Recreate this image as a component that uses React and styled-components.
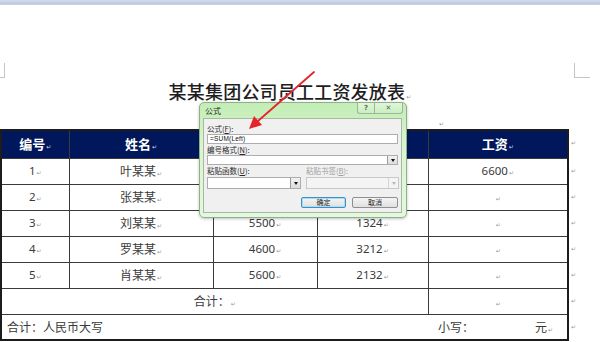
import React from "react";
import styled, { createGlobalStyle } from "styled-components";

const Global = createGlobalStyle`
  html, body { margin: 0; padding: 0; background: #fff; }
  body { width: 600px; height: 342px; overflow: hidden; font-family: "Noto Sans CJK SC", "Noto Sans", sans-serif; }
`;

const Page = styled.div`
  position: relative;
  width: 600px;
  height: 342px;
  overflow: hidden;
  background: #fff;
`;

const TopBar = styled.div`
  height: 5px;
  background: linear-gradient(#d3deec, #b7c8dd);
  border-bottom: 1px solid #c9d3df;
  box-sizing: border-box;
`;

const CornerRow = styled.div`
  display: flex;
  justify-content: space-between;
  padding: 58px 10px 0 0;
  height: 16px;
`;

const Corner = styled.div`
  width: ${(p) => p.$w}px;
  height: 15px;
  box-sizing: border-box;
  border-bottom: 1px solid #c4c4c4;
  ${(p) => (p.$side === "left" ? "border-right: 1px solid #c4c4c4;" : "border-left: 1px solid #c4c4c4;")}
`;

const Title = styled.div`
  margin-top: 2px;
  width: 580px;
  height: 20px;
  text-align: center;
  font-family: "Noto Sans CJK SC", sans-serif;
  font-weight: 500;
  font-size: 18px;
  line-height: 20px;
  color: #1e1e1e;
  letter-spacing: 0.2px;
  overflow: visible;
`;

const EmptyLine = styled.div`
  height: 28px;
  padding: 14px 0 0 438px;
  box-sizing: border-box;
  line-height: 8px;
`;

const Mark = styled.span`
  font-family: "DejaVu Sans", sans-serif;
  font-size: 6px;
  line-height: 0;
  color: ${(p) => (p.$light ? "#cfd3e6" : "#9a9a9a")};
  margin-left: 1px;
  font-weight: 400;
`;

const TableWrap = styled.div`
  display: flex;
  align-items: flex-start;
`;

const Table = styled.table`
  width: 567px;
  table-layout: fixed;
  border-collapse: collapse;
  border: 2px solid #1c1c1c;
  font-size: 12px;
  color: #383838;
`;

const HeadRow = styled.tr`
  height: 28px;
  background: #00175c;
`;

const Th = styled.th`
  border: 1px solid #3a3a3a;
  color: #fff;
  font-family: "Noto Sans CJK SC", sans-serif;
  font-weight: 600;
  font-size: 13px;
  line-height: 16px;
  padding: 0;
  text-align: center;
`;

const Row = styled.tr`
  height: 26px;
`;

const Td = styled.td`
  border: 1px solid #3a3a3a;
  padding: 0;
  line-height: 16px;
  text-align: ${(p) => p.$align || "center"};
  font-family: ${(p) => (p.$num ? '"Noto Sans", sans-serif' : '"Noto Sans CJK SC", sans-serif')};
  font-size: ${(p) => (p.$num ? "11.5px" : "12px")};
  color: #3a3a3a;
`;

const FootLine = styled.div`
  display: flex;
  align-items: center;
  padding-left: 5px;
  font-size: 12px;
`;

const Grow = styled.span`
  flex: 1;
`;

const Small = styled.span`
  margin-right: 61px;
`;

const Yuan = styled.span`
  margin-right: 14px;
`;

const MarkCol = styled.div`
  display: flex;
  flex-direction: column;
  padding-left: 1px;
  line-height: 8px;
`;

const MarkCell = styled.div`
  height: ${(p) => p.$h}px;
  padding-top: 5px;
  box-sizing: border-box;
`;

/* Dialog */
const Dialog = styled.div`
  position: absolute;
  left: 199px;
  top: 102px;
  width: 208px;
  height: 116px;
  box-sizing: border-box;
  border: 1px solid #90b08a;
  border-radius: 5px;
  background: linear-gradient(#c3edb6, #d9f5d0 40%, #e3f8dd);
  padding: 0 4px 4px 3px;
  display: flex;
  flex-direction: column;
  box-shadow: 0 1px 3px rgba(0, 0, 0, 0.25);
  font-family: "Noto Sans CJK SC", sans-serif;
  font-size: 7.5px;
  color: #222;
`;

const TitleBar = styled.div`
  height: 15px;
  display: flex;
  justify-content: space-between;
  align-items: flex-start;
`;

const Caption = styled.span`
  padding: 2px 0 0 2px;
  font-size: 8px;
  line-height: 11px;
  color: #1a1a1a;
`;

const CapButtons = styled.div`
  display: flex;
  margin-right: -1px;
`;

const CapBtn = styled.div`
  width: ${(p) => p.$w}px;
  height: 11px;
  box-sizing: border-box;
  border: 1px solid #9fb59b;
  border-top: none;
  ${(p) => (p.$first ? "border-radius: 0 0 0 3px; border-right: none;" : "border-radius: 0 0 3px 0;")}
  background: linear-gradient(#dff6d8, #cbeec1);
  display: flex;
  align-items: center;
  justify-content: center;
  color: #606a60;
  font-family: "DejaVu Sans", sans-serif;
  font-size: 7px;
  font-weight: 700;
  line-height: 1;
`;

const Panel = styled.div`
  flex: 1;
  background: #f0f0f0;
  border: 1px solid #a7b9a4;
  padding: 4px 3px 0 3px;
  display: flex;
  flex-direction: column;
`;

const Label = styled.div`
  height: ${(p) => p.$h || 11}px;
  line-height: ${(p) => p.$h || 11}px;
  color: ${(p) => (p.$disabled ? "#a0a0a0" : "#2a2a2a")};
  white-space: nowrap;
  u { text-decoration: underline; }
`;

const Input = styled.div`
  height: 10px;
  box-sizing: border-box;
  background: #fff;
  border: 1px solid #abadb3;
  font-family: "Liberation Sans", sans-serif;
  font-size: 6.5px;
  line-height: 8px;
  padding-left: 2px;
  color: #111;
  letter-spacing: 0.2px;
`;

const Select = styled.div`
  height: ${(p) => p.$h || 10}px;
  box-sizing: border-box;
  background: ${(p) => (p.$disabled ? "#f4f4f4" : "#fff")};
  border: 1px solid ${(p) => (p.$disabled ? "#c8c8c8" : "#abadb3")};
  display: flex;
  justify-content: flex-end;
`;

const Drop = styled.div`
  width: 10px;
  height: 100%;
  box-sizing: border-box;
  border-left: 1px solid ${(p) => (p.$disabled ? "#d4d4d4" : "#9a9a9a")};
  background: ${(p) => (p.$disabled ? "#f4f4f4" : "linear-gradient(#f2f2f2, #dcdcdc)")};
  display: flex;
  align-items: center;
  justify-content: center;
  &::after {
    content: "";
    border-left: 2.5px solid transparent;
    border-right: 2.5px solid transparent;
    border-top: 3px solid ${(p) => (p.$disabled ? "#b8b8b8" : "#111")};
  }
`;

const Pair = styled.div`
  display: grid;
  grid-template-columns: 94px 93px;
  column-gap: 5px;
`;

const Buttons = styled.div`
  margin-top: 8px;
  display: flex;
  justify-content: flex-end;
  gap: 6px;
`;

const Btn = styled.div`
  width: ${(p) => p.$w}px;
  height: 11px;
  box-sizing: border-box;
  border: 1px solid ${(p) => (p.$primary ? "#3c8fc9" : "#8e8f8f")};
  border-radius: 2px;
  background: linear-gradient(#f4f4f4, #e0e0e0);
  box-shadow: ${(p) => (p.$primary ? "inset 0 0 0 1px #a9dcf5" : "none")};
  font-size: 7px;
  line-height: 9px;
  text-align: center;
  color: #222;
`;

const Overlay = styled.svg`
  position: absolute;
  left: 0;
  top: 0;
  pointer-events: none;
`;

const rows = [
  ["1", "叶某某", "", "", "6600"],
  ["2", "张某某", "", "", ""],
  ["3", "刘某某", "5500", "1324", ""],
  ["4", "罗某某", "4600", "3212", ""],
  ["5", "肖某某", "5600", "2132", ""],
];

const markHeights = [28, 26, 26, 26, 26, 26, 26, 26];

export default function App() {
  return (
    <Page>
      <Global />
      <TopBar />
      <CornerRow>
        <Corner $side="left" $w={5} />
        <Corner $side="right" $w={16} />
      </CornerRow>
      <Title>
        某某集团公司员工工资发放表<Mark>↵</Mark>
      </Title>
      <EmptyLine>
        <Mark>↵</Mark>
      </EmptyLine>
      <TableWrap>
        <Table>
          <colgroup>
            <col style={{ width: 68 }} />
            <col style={{ width: 144 }} />
            <col style={{ width: 104 }} />
            <col style={{ width: 111 }} />
            <col style={{ width: 140 }} />
          </colgroup>
          <thead>
            <HeadRow>
              <Th>编号<Mark $light>↵</Mark></Th>
              <Th>姓名<Mark $light>↵</Mark></Th>
              <Th />
              <Th />
              <Th>工资<Mark $light>↵</Mark></Th>
            </HeadRow>
          </thead>
          <tbody>
            {rows.map((r) => (
              <Row key={r[0]}>
                <Td $num>{r[0]}<Mark>↵</Mark></Td>
                <Td>{r[1]}<Mark>↵</Mark></Td>
                <Td $num>{r[2] && <>{r[2]}<Mark>↵</Mark></>}</Td>
                <Td $num>{r[3] && <>{r[3]}<Mark>↵</Mark></>}</Td>
                <Td $num>{r[4]}<Mark>↵</Mark></Td>
              </Row>
            ))}
            <Row>
              <Td colSpan={4}>合计：<Mark>↵</Mark></Td>
              <Td><Mark>↵</Mark></Td>
            </Row>
            <Row>
              <Td colSpan={5} $align="left">
                <FootLine>
                  <span>合计：人民币大写</span>
                  <Grow />
                  <Small>小写：</Small>
                  <Yuan>元<Mark>↵</Mark></Yuan>
                </FootLine>
              </Td>
            </Row>
          </tbody>
        </Table>
        <MarkCol>
          {markHeights.map((h, i) => (
            <MarkCell key={i} $h={h}>
              <Mark>↵</Mark>
            </MarkCell>
          ))}
        </MarkCol>
      </TableWrap>

      <Dialog>
        <TitleBar>
          <Caption>公式</Caption>
          <CapButtons>
            <CapBtn $w={17} $first>?</CapBtn>
            <CapBtn $w={29}>✕</CapBtn>
          </CapButtons>
        </TitleBar>
        <Panel>
          <Label>公式(<u>F</u>):</Label>
          <Input>=SUM(Left)</Input>
          <Label>编号格式(<u>N</u>):</Label>
          <Select>
            <Drop />
          </Select>
          <Pair>
            <Label $h={12}>粘贴函数(<u>U</u>):</Label>
            <Label $h={12} $disabled>粘贴书签(<u>B</u>):</Label>
            <Select $h={12}>
              <Drop />
            </Select>
            <Select $h={12} $disabled>
              <Drop $disabled />
            </Select>
          </Pair>
          <Buttons>
            <Btn $w={45} $primary>确定</Btn>
            <Btn $w={46}>取消</Btn>
          </Buttons>
        </Panel>
      </Dialog>

      <Overlay width="600" height="342" viewBox="0 0 600 342">
        <line x1="314" y1="72" x2="258" y2="121" stroke="#e5252a" strokeWidth="1.8" strokeLinecap="round" />
        <polygon points="249,129 254,116 262,125" fill="#e5252a" />
      </Overlay>
    </Page>
  );
}
